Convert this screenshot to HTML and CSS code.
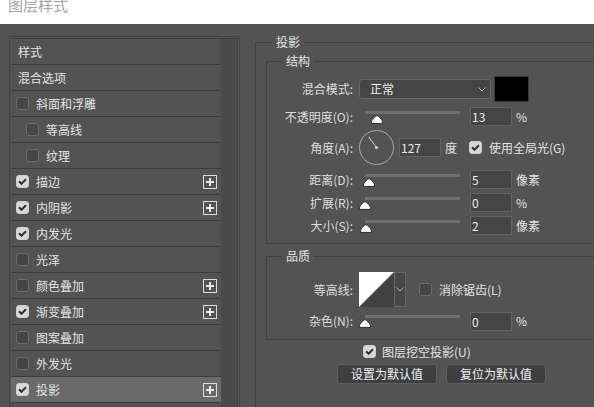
FILE: index.html
```html
<!DOCTYPE html>
<html lang="zh">
<head>
<meta charset="utf-8">
<title>图层样式</title>
<link rel="stylesheet" href="styles.css">
</head>
<body>
<header class="titlebar"><span class="title">图层样式</span></header>
<main class="dialog">
  <aside class="styles-panel">
    <div class="styles-inner">
      <ul class="style-list">
        <li class="row heading">样式</li>
        <li class="row heading">混合选项</li>
        <li class="row"><span class="cb"></span><span class="name">斜面和浮雕</span></li>
        <li class="row sub"><span class="cb"></span><span class="name">等高线</span></li>
        <li class="row sub"><span class="cb"></span><span class="name">纹理</span></li>
        <li class="row"><span class="cb on"><svg width="9" height="7" viewBox="0 0 9 7"><path d="M1 3.3 L3.5 5.8 L8 1.2" fill="none" stroke="#333" stroke-width="2"/></svg></span><span class="name">描边</span><span class="plus"><svg width="14" height="14" viewBox="0 0 14 14"><rect x="0.5" y="0.5" width="13" height="13" fill="none" stroke="#dcdcdc"/><path d="M7 3v8M3 7h8" stroke="#e8e8e8" stroke-width="2"/></svg></span></li>
        <li class="row"><span class="cb on"><svg width="9" height="7" viewBox="0 0 9 7"><path d="M1 3.3 L3.5 5.8 L8 1.2" fill="none" stroke="#333" stroke-width="2"/></svg></span><span class="name">内阴影</span><span class="plus"><svg width="14" height="14" viewBox="0 0 14 14"><rect x="0.5" y="0.5" width="13" height="13" fill="none" stroke="#dcdcdc"/><path d="M7 3v8M3 7h8" stroke="#e8e8e8" stroke-width="2"/></svg></span></li>
        <li class="row"><span class="cb on"><svg width="9" height="7" viewBox="0 0 9 7"><path d="M1 3.3 L3.5 5.8 L8 1.2" fill="none" stroke="#333" stroke-width="2"/></svg></span><span class="name">内发光</span></li>
        <li class="row"><span class="cb"></span><span class="name">光泽</span></li>
        <li class="row"><span class="cb"></span><span class="name">颜色叠加</span><span class="plus"><svg width="14" height="14" viewBox="0 0 14 14"><rect x="0.5" y="0.5" width="13" height="13" fill="none" stroke="#dcdcdc"/><path d="M7 3v8M3 7h8" stroke="#e8e8e8" stroke-width="2"/></svg></span></li>
        <li class="row"><span class="cb on"><svg width="9" height="7" viewBox="0 0 9 7"><path d="M1 3.3 L3.5 5.8 L8 1.2" fill="none" stroke="#333" stroke-width="2"/></svg></span><span class="name">渐变叠加</span><span class="plus"><svg width="14" height="14" viewBox="0 0 14 14"><rect x="0.5" y="0.5" width="13" height="13" fill="none" stroke="#dcdcdc"/><path d="M7 3v8M3 7h8" stroke="#e8e8e8" stroke-width="2"/></svg></span></li>
        <li class="row"><span class="cb"></span><span class="name">图案叠加</span></li>
        <li class="row"><span class="cb"></span><span class="name">外发光</span></li>
        <li class="row active"><span class="cb on"><svg width="9" height="7" viewBox="0 0 9 7"><path d="M1 3.3 L3.5 5.8 L8 1.2" fill="none" stroke="#333" stroke-width="2"/></svg></span><span class="name">投影</span><span class="plus"><svg width="14" height="14" viewBox="0 0 14 14"><rect x="0.5" y="0.5" width="13" height="13" fill="none" stroke="#dcdcdc"/><path d="M7 3v8M3 7h8" stroke="#e8e8e8" stroke-width="2"/></svg></span></li>
      </ul>
      <div class="scrollbar"></div>
    </div>
  </aside>

  <section class="settings">
    <fieldset class="group outer">
      <legend>投影</legend>

      <fieldset class="group inner structure">
        <legend>结构</legend>

        <div class="field f-blend">
          <span class="label">混合模式:</span>
          <div class="select"><span>正常</span><svg width="8" height="5" viewBox="0 0 8 5"><path d="M0.5 0.5 L4 4 L7.5 0.5" fill="none" stroke="#bbb"/></svg></div>
          <span class="swatch"></span>
        </div>

        <div class="field f-opacity">
          <span class="label">不透明度(O):</span>
          <div class="slider"><span class="track"></span><svg class="thumb" style="left:12px" width="12" height="9" viewBox="0 0 12 9"><path d="M6 0.6 C7.2 0.6 11.4 4.8 11.4 6.4 L11.4 8.4 L0.6 8.4 L0.6 6.4 C0.6 4.8 4.8 0.6 6 0.6 Z" fill="#fff" stroke="#2a2a2a" stroke-width="1"/></svg></div>
          <span class="input">13</span>
          <span class="unit">%</span>
        </div>

        <div class="field f-angle">
          <span class="label">角度(A):</span>
          <svg class="dial" width="35" height="35" viewBox="0 0 35 35"><circle cx="17.5" cy="17.5" r="17" fill="none" stroke="#a8a8a8"/><path d="M17.5 17.5 L9.5 6.8" stroke="#cfcfcf" stroke-width="1"/><circle cx="17.5" cy="17.5" r="1.6" fill="#cfcfcf"/></svg>
          <span class="input">127</span>
          <span class="unit">度</span>
          <span class="cb on gap-cb"><svg width="9" height="7" viewBox="0 0 9 7"><path d="M1 3.3 L3.5 5.8 L8 1.2" fill="none" stroke="#333" stroke-width="2"/></svg></span>
          <span class="cb-text">使用全局光(G)</span>
        </div>

        <div class="field f-dist">
          <span class="label">距离(D):</span>
          <div class="slider"><span class="track"></span><svg class="thumb" style="left:4px" width="12" height="9" viewBox="0 0 12 9"><path d="M6 0.6 C7.2 0.6 11.4 4.8 11.4 6.4 L11.4 8.4 L0.6 8.4 L0.6 6.4 C0.6 4.8 4.8 0.6 6 0.6 Z" fill="#fff" stroke="#2a2a2a" stroke-width="1"/></svg></div>
          <span class="input">5</span>
          <span class="unit">像素</span>
        </div>

        <div class="field f-row">
          <span class="label">扩展(R):</span>
          <div class="slider"><span class="track"></span><svg class="thumb" style="left:0px" width="12" height="9" viewBox="0 0 12 9"><path d="M6 0.6 C7.2 0.6 11.4 4.8 11.4 6.4 L11.4 8.4 L0.6 8.4 L0.6 6.4 C0.6 4.8 4.8 0.6 6 0.6 Z" fill="#fff" stroke="#2a2a2a" stroke-width="1"/></svg></div>
          <span class="input">0</span>
          <span class="unit">%</span>
        </div>

        <div class="field f-row">
          <span class="label">大小(S):</span>
          <div class="slider"><span class="track"></span><svg class="thumb" style="left:1px" width="12" height="9" viewBox="0 0 12 9"><path d="M6 0.6 C7.2 0.6 11.4 4.8 11.4 6.4 L11.4 8.4 L0.6 8.4 L0.6 6.4 C0.6 4.8 4.8 0.6 6 0.6 Z" fill="#fff" stroke="#2a2a2a" stroke-width="1"/></svg></div>
          <span class="input">2</span>
          <span class="unit">像素</span>
        </div>
      </fieldset>

      <fieldset class="group inner quality">
        <legend>品质</legend>

        <div class="field f-contour">
          <span class="label">等高线:</span>
          <div class="contour">
            <svg class="curve" width="35" height="35" viewBox="0 0 35 35"><rect width="35" height="35" fill="#414141"/><polygon points="0,0 35,0 0,35" fill="#fff"/></svg>
            <span class="drop"><svg width="8" height="5" viewBox="0 0 8 5"><path d="M0.5 0.5 L4 4 L7.5 0.5" fill="none" stroke="#aaa"/></svg></span>
          </div>
          <span class="cb gap-aa"></span>
          <span class="cb-text">消除锯齿(L)</span>
        </div>

        <div class="field f-noise">
          <span class="label">杂色(N):</span>
          <div class="slider"><span class="track"></span><svg class="thumb" style="left:0px" width="12" height="9" viewBox="0 0 12 9"><path d="M6 0.6 C7.2 0.6 11.4 4.8 11.4 6.4 L11.4 8.4 L0.6 8.4 L0.6 6.4 C0.6 4.8 4.8 0.6 6 0.6 Z" fill="#fff" stroke="#2a2a2a" stroke-width="1"/></svg></div>
          <span class="input">0</span>
          <span class="unit">%</span>
        </div>
      </fieldset>

      <div class="knockout">
        <span class="cb on"><svg width="9" height="7" viewBox="0 0 9 7"><path d="M1 3.3 L3.5 5.8 L8 1.2" fill="none" stroke="#333" stroke-width="2"/></svg></span>
        <span class="cb-text">图层挖空投影(U)</span>
      </div>

      <div class="buttons">
        <button class="btn" type="button">设置为默认值</button>
        <button class="btn" type="button">复位为默认值</button>
      </div>
    </fieldset>
  </section>
</main>
</body>
</html>
```

FILE: styles.css
```css
* { box-sizing: border-box; }

html, body { margin: 0; padding: 0; }

body {
  width: 594px;
  height: 407px;
  overflow: hidden;
  background: #535353;
  color: #e2e2e2;
  font-family: "Noto Sans CJK SC", "Noto Sans", sans-serif;
  font-size: 12px;
  line-height: 14px;
}

/* title strip */
.titlebar {
  display: flex;
  align-items: flex-start;
  height: 24px;
  background: #ffffff;
  overflow: hidden;
  padding-left: 8px;
}
.title {
  font-size: 15px;
  line-height: 15px;
  color: #a4a4a4;
  margin-top: -3px;
}

.dialog {
  display: flex;
  height: 383px;
  overflow: hidden;
}

/* left styles list */
.styles-panel {
  flex: none;
  width: 231px;
  height: 400px;
  margin: 12px 0 0 9px;
  border: 1px solid #454545;
  padding: 1px 1px 0 1px;
}
.styles-inner {
  display: flex;
  height: 100%;
  border-top: 1px solid #3f3f3f;
  border-right: 1px solid #454545;
}
.style-list {
  list-style: none;
  margin: 0;
  padding: 0;
  width: 210px;
  flex: none;
}
.scrollbar {
  width: 16px;
  background: #4a4a4a;
}
.row {
  display: flex;
  align-items: center;
  height: 26px;
  border-bottom: 1px solid #3c3c3c;
  padding-left: 5px;
  color: #e4e4e4;
}
.row.heading { padding-left: 7px; }
.row.sub { padding-left: 15px; }
.row.active { background: #6a6a6a; }
.row .name { margin-left: 7px; }
.plus {
  display: flex;
  margin-left: auto;
  margin-right: 4px;
}

/* checkbox */
.cb {
  flex: none;
  display: flex;
  align-items: center;
  justify-content: center;
  width: 13px;
  height: 13px;
  border: 1px solid #6c6c6c;
  border-radius: 3px;
  background: #464646;
}
.cb.on {
  background: #d8d8d8;
  border-color: #cfcfcf;
}
.cb-text { margin-left: 7px; }

/* right settings */
.settings {
  flex: 1;
  min-width: 0;
  overflow: hidden;
  margin-left: 15px;
}
.group {
  margin: 0;
  padding: 0;
  min-width: 0;
  border: 1px solid #414141;
}
.group > legend {
  padding: 0 4px;
  font-size: 12px;
  line-height: 14px;
  color: #e4e4e4;
}
.outer {
  margin-top: 11px;
  width: 370px;
  min-height: 420px;
}
.outer > legend { margin-left: 16px; }
.inner {
  margin: 5px 0 0 10px;
  width: 360px;
}
.inner > legend { margin-left: 15px; }
.structure { padding: 8px 0 6px 0; }
.quality { padding: 9px 0 7px 0; }

.field {
  display: flex;
  align-items: center;
}
.label {
  flex: none;
  width: 86px;
  margin-right: 6px;
  text-align: right;
  color: #dedede;
}
.f-blend { height: 26px; }
.f-opacity { height: 25px; margin-top: 2px; }
.f-angle { height: 35px; margin-top: 1px; }
.f-dist { height: 23px; margin-top: 3px; }
.f-row { height: 23px; }
.f-contour { height: 35px; }
.f-noise { height: 22px; margin-top: 3px; }

.select {
  flex: none;
  display: flex;
  align-items: center;
  justify-content: space-between;
  width: 132px;
  height: 20px;
  padding: 0 4px 0 10px;
  border: 1px solid #676767;
  border-radius: 3px;
  background: #454545;
  color: #ececec;
}
.swatch {
  flex: none;
  width: 35px;
  height: 26px;
  margin-left: 3px;
  background: #000;
  border: 1px solid #3c3c3c;
}

.slider {
  position: relative;
  flex: none;
  width: 111px;
  height: 12px;
}
.track {
  display: block;
  width: 95px;
  height: 3px;
  margin-left: 6px;
  background: #6f6f6f;
}
.thumb {
  position: absolute;
  top: 4px;
}

.input {
  flex: none;
  width: 42px;
  height: 19px;
  padding-left: 1px;
  line-height: 17px;
  background: #454545;
  border: 1px solid #626262;
  color: #ececec;
}
.unit { margin-left: 4px; }

.dial { flex: none; margin-right: 5px; }
.gap-cb { margin-left: 12px; }

.contour {
  flex: none;
  display: flex;
  height: 35px;
}
.curve { display: block; }
.drop {
  display: flex;
  align-items: center;
  justify-content: center;
  width: 12px;
  height: 35px;
  background: #474747;
  border: 1px solid #676767;
}
.gap-aa { margin-left: 13px; }

.knockout {
  display: flex;
  align-items: center;
  height: 15px;
  margin-top: 4px;
  padding-left: 107px;
}
.knockout .cb-text { margin-left: 6px; }

.buttons {
  display: flex;
  gap: 9px;
  margin-top: 5px;
  padding-left: 81px;
}
.btn {
  width: 100px;
  height: 20px;
  padding: 0;
  border: 1px solid #5e5e5e;
  border-radius: 3px;
  background: #3f3f3f;
  color: #efefef;
  font-family: inherit;
  font-size: 12px;
  line-height: 14px;
}
```
